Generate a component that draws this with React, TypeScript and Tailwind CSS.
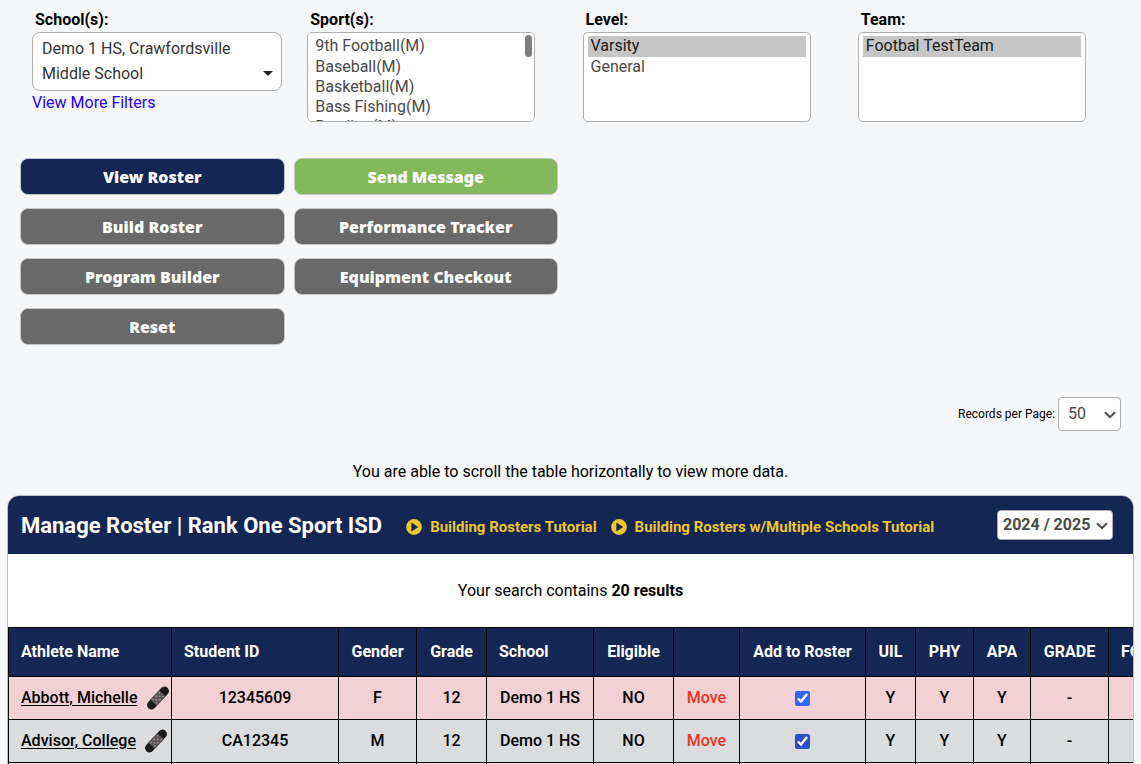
import { useState } from "react";
import type { ReactNode } from "react";
import clsx from "clsx";

interface Athlete {
  id: string;
  name: string;
  gender: string;
  grade: string;
  school: string;
  eligible: string;
  rowClass: string;
  accentClass: string;
}

const SPORTS = [
  "9th Football(M)",
  "Baseball(M)",
  "Basketball(M)",
  "Bass Fishing(M)",
  "Bowling(M)",
  "Cheerleading(M)",
  "Cross Country(M)",
  "Diving(M)",
  "Football(M)",
  "Golf(M)",
  "Soccer(M)",
  "Swimming(M)",
  "Tennis(M)",
  "Track(M)",
  "Wrestling(M)",
];

const ATHLETES: Athlete[] = [
  {
    id: "12345609",
    name: "Abbott, Michelle",
    gender: "F",
    grade: "12",
    school: "Demo 1 HS",
    eligible: "NO",
    rowClass: "bg-[#f3d0d4]",
    accentClass: "accent-[#2f66f6]",
  },
  {
    id: "CA12345",
    name: "Advisor, College",
    gender: "M",
    grade: "12",
    school: "Demo 1 HS",
    eligible: "NO",
    rowClass: "bg-[#dbdcde]",
    accentClass: "accent-[#2950c4]",
  },
];

const COLUMNS = [
  { label: "Athlete Name", className: "w-[163px] text-left" },
  { label: "Student ID", className: "w-[167px] text-left" },
  { label: "Gender", className: "w-[78px]" },
  { label: "Grade", className: "w-[70px]" },
  { label: "School", className: "w-[107px] text-left" },
  { label: "Eligible", className: "w-[80px]" },
  { label: "", className: "w-[66px]" },
  { label: "Add to Roster", className: "w-[126px]" },
  { label: "UIL", className: "w-[50px]" },
  { label: "PHY", className: "w-[58px]" },
  { label: "APA", className: "w-[57px]" },
  { label: "GRADE", className: "w-[78px]" },
  { label: "FORMS", className: "w-[78px]" },
];

const ACTIONS = [
  { label: "View Roster", color: "bg-[#142653]" },
  { label: "Send Message", color: "bg-[#83b85b]" },
  { label: "Build Roster", color: "bg-[#696969]" },
  { label: "Performance Tracker", color: "bg-[#696969]" },
  { label: "Program Builder", color: "bg-[#696969]" },
  { label: "Equipment Checkout", color: "bg-[#696969]" },
  { label: "Reset", color: "bg-[#696969]" },
];

function BandageIcon() {
  return (
    <svg viewBox="0 0 24 24" className="size-6 shrink-0" aria-hidden="true">
      <g transform="rotate(-47 12 12)">
        <rect x="-2" y="7.5" width="28" height="9" rx="4.5" fill="#1d1b1c" />
        <rect x="5.5" y="7.5" width="13" height="9" fill="#5d5658" />
        <g fill="#a9a0a2">
          <circle cx="7.5" cy="9.5" r="0.7" />
          <circle cx="7.5" cy="14.5" r="0.7" />
          <circle cx="9.5" cy="12" r="0.8" />
          <circle cx="12" cy="9.5" r="0.8" />
          <circle cx="12" cy="14.5" r="0.8" />
          <circle cx="14.5" cy="12" r="0.8" />
          <circle cx="16.5" cy="9.5" r="0.7" />
          <circle cx="16.5" cy="14.5" r="0.7" />
        </g>
      </g>
    </svg>
  );
}

function PlayIcon() {
  return (
    <svg viewBox="0 0 16 16" className="size-4 shrink-0" aria-hidden="true">
      <circle cx="8" cy="8" r="7.9" fill="#ecc52f" />
      <path d="M5.4 3.6v8.8L12.2 8z" fill="#142653" />
    </svg>
  );
}

function Chevron({ className }: { className: string }) {
  return (
    <svg
      viewBox="0 0 12 8"
      className={clsx("pointer-events-none absolute h-2 w-3", className)}
      fill="none"
      stroke="#4a4a4a"
      strokeWidth="2"
      aria-hidden="true"
    >
      <path d="M1 1.2 6 6.2 11 1.2" />
    </svg>
  );
}

function Field({ id, label, children }: { id: string; label: string; children: ReactNode }) {
  return (
    <div>
      <label htmlFor={id} className="block h-6 pl-[3px] leading-6 font-bold text-black">
        {label}
      </label>
      {children}
    </div>
  );
}

function ListBox({ id, options, selected = [] }: { id: string; options: string[]; selected?: string[] }) {
  return (
    <div className="relative max-w-[228px]">
      <select
        id={id}
        multiple
        defaultValue={selected}
        className="block h-[90px] w-full overflow-y-auto rounded-[5px] border border-[#aeaeae] bg-white px-1 py-[3px] text-[#4a4a4a]"
      >
        {options.map((o) => (
          <option
            key={o}
            className="h-5 min-h-5 px-[3px] py-0 leading-5 first:h-[21px] checked:bg-[#c6c6c6] checked:bg-linear-to-r checked:from-[#c6c6c6] checked:to-[#c6c6c6] checked:text-[#1a1a1a]"
          >
            {o}
          </option>
        ))}
      </select>
      {/* scroll thumb, only when the list is longer than the box */}
      {options.length > 4 && (
        <span className="pointer-events-none absolute top-[3px] right-[3px] h-[22px] w-[7px] rounded-full bg-[#7f7f7f]" />
      )}
    </div>
  );
}

function TutorialLink({ children }: { children: ReactNode }) {
  return (
    <a href="#" className="flex items-center gap-2 text-[15px] font-bold text-[#ecc52f]">
      <PlayIcon />
      {children}
    </a>
  );
}

export default function App() {
  const [perPage, setPerPage] = useState("50");
  const [year, setYear] = useState("2024 / 2025");

  return (
    <main className="h-screen overflow-hidden bg-[#f5f7f9] px-[7px] pt-2 font-[Roboto,sans-serif] text-base text-black">
      {/* Filters */}
      <section className="grid h-[150px] grid-cols-4 pr-px pl-[25px]">
        <Field id="schools" label="School(s):">
          <button
            id="schools"
            type="button"
            aria-haspopup="listbox"
            className="flex w-full max-w-[250px] items-end justify-between rounded-lg border border-[#aeaeae] bg-white pt-[3px] pr-2 pb-1 pl-[9px] text-left leading-[25px] text-[#333]"
          >
            <span>
              Demo 1 HS, Crawfordsville
              <br />
              Middle School
            </span>
            <svg viewBox="0 0 10 5" className="mb-2.5 h-[5px] w-2.5" aria-hidden="true">
              <path d="M0 0h10L5 5z" fill="#222" />
            </svg>
          </button>
          <a href="#" className="block leading-6 text-[#2600f5]">
            View More Filters
          </a>
        </Field>
        <Field id="sports" label="Sport(s):">
          <ListBox id="sports" options={SPORTS} />
        </Field>
        <Field id="level" label="Level:">
          <ListBox id="level" options={["Varsity", "General"]} selected={["Varsity"]} />
        </Field>
        <Field id="team" label="Team:">
          <ListBox id="team" options={["Footbal TestTeam"]} selected={["Footbal TestTeam"]} />
        </Field>
      </section>

      {/* Roster actions */}
      <section className="ml-[13px] grid max-w-[538px] grid-cols-2 gap-x-[9px] gap-y-[13px]">
        {ACTIONS.map((a) => (
          <button
            key={a.label}
            type="button"
            className={clsx(
              "h-[37px] rounded-lg border border-[#c4c4c4] font-['Noto_Sans',sans-serif] text-base font-black text-white",
              a.color,
            )}
          >
            {a.label}
          </button>
        ))}
      </section>

      <div className="mt-[52px] flex items-center justify-end gap-[3px] pr-[13px]">
        <label htmlFor="per-page" className="text-xs">
          Records per Page:
        </label>
        <div className="relative">
          <select
            id="per-page"
            value={perPage}
            onChange={(e) => setPerPage(e.target.value)}
            className="block h-[34px] w-[63px] appearance-none rounded border border-[#aeaeae] bg-white pl-[9px] text-[#4a4a4a]"
          >
            <option>25</option>
            <option>50</option>
            <option>100</option>
          </select>
          <Chevron className="top-[14px] right-[5px]" />
        </div>
      </div>

      <p className="mt-[29px] text-center leading-6">You are able to scroll the table horizontally to view more data.</p>

      {/* Roster card */}
      <section className="mt-[11px] overflow-hidden rounded-t-xl border border-[#bfbfbf] bg-white">
        <header className="flex h-[58px] items-center bg-[#142653] pr-5 pl-[13px]">
          <h1 className="mr-6 text-[22px] font-bold text-white">Manage Roster | Rank One Sport ISD</h1>
          <nav className="flex gap-3.5 pt-1">
            <TutorialLink>Building Rosters Tutorial</TutorialLink>
            <TutorialLink>Building Rosters w/Multiple Schools Tutorial</TutorialLink>
          </nav>
          <div className="relative ml-auto">
            <select
              aria-label="School year"
              value={year}
              onChange={(e) => setYear(e.target.value)}
              className="block h-[30px] w-[116px] appearance-none rounded border border-[#aeaeae] bg-white pl-[5px] font-bold text-[#4a4a4a]"
            >
              <option>2023 / 2024</option>
              <option>2024 / 2025</option>
            </select>
            <Chevron className="top-3 right-[5px]" />
          </div>
        </header>

        <p className="py-6 text-center leading-[25px]">
          Your search contains <b>20 results</b>
        </p>

        <div className="overflow-hidden">
          <table className="w-[1178px] table-fixed border-collapse text-center font-medium whitespace-nowrap">
            <thead className="bg-[#142653] text-white">
              <tr className="h-[49px]">
                {COLUMNS.map((c) => (
                  <th key={c.label} className={clsx("border border-black px-3 font-bold", c.className)}>
                    {c.label}
                  </th>
                ))}
              </tr>
            </thead>
            <tbody>
              {ATHLETES.map((a) => (
                <tr key={a.id} className={clsx("h-[43px]", a.rowClass)}>
                  <td className="border border-black pl-3">
                    <div className="flex items-center gap-2">
                      <a href="#" className="underline underline-offset-2">
                        {a.name}
                      </a>
                      <BandageIcon />
                    </div>
                  </td>
                  <td className="border border-black">{a.id}</td>
                  <td className="border border-black">{a.gender}</td>
                  <td className="border border-black">{a.grade}</td>
                  <td className="border border-black">{a.school}</td>
                  <td className="border border-black">{a.eligible}</td>
                  <td className="border border-black">
                    <a href="#" className="text-[#ea3323]">
                      Move
                    </a>
                  </td>
                  <td className="border border-black">
                    <input
                      type="checkbox"
                      defaultChecked
                      aria-label={`Add ${a.name} to roster`}
                      className={clsx("mx-auto block size-[15px]", a.accentClass)}
                    />
                  </td>
                  <td className="border border-black">Y</td>
                  <td className="border border-black">Y</td>
                  <td className="border border-black">Y</td>
                  <td className="border border-black">-</td>
                  <td className="border border-black" />
                </tr>
              ))}
              <tr className="h-[43px] bg-[#f9d8d6]">
                {COLUMNS.map((c) => (
                  <td key={c.label} className="border border-black" />
                ))}
              </tr>
            </tbody>
          </table>
        </div>
      </section>
    </main>
  );
}
